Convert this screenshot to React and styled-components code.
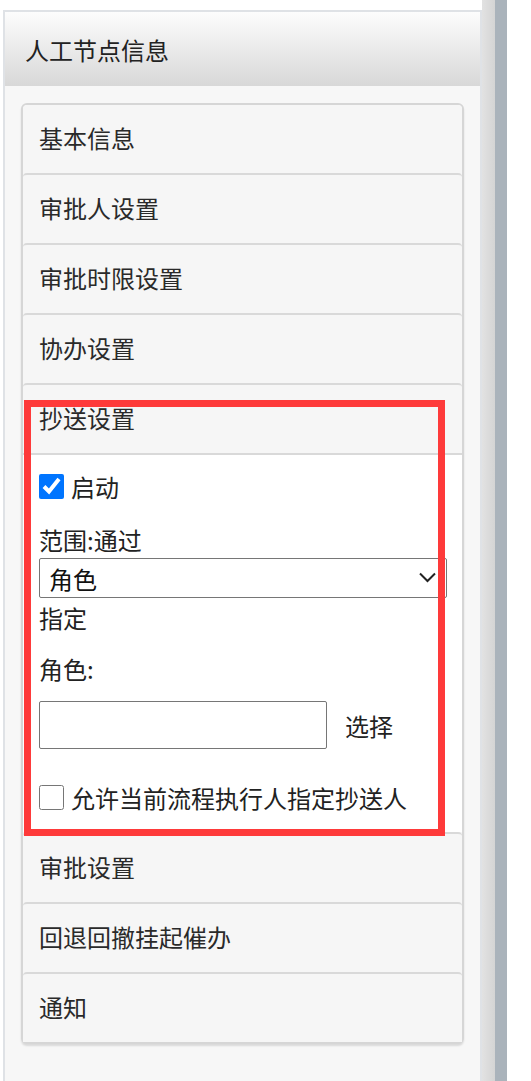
import styled, { createGlobalStyle } from 'styled-components';

const GlobalStyle = createGlobalStyle`
  html, body {
    margin: 0;
    padding: 0;
    background: #ffffff;
  }
  body {
    font-family: "Noto Sans CJK SC", "Noto Sans", "Liberation Sans", sans-serif;
    color: #222;
  }
`

const Page = styled.div`
  display: flex;
  min-height: 1081px;
  padding-left: 3px;
  background: #fff;
`

const Panel = styled.div`
  box-sizing: border-box;
  width: 479px;
  margin-top: 10px;
  border: 2px solid #dfe2e6;
  border-bottom: none;
  background: #f7f7f7;
`

const PanelHeader = styled.div`
  height: 74px;
  display: flex;
  align-items: center;
  padding: 1px 0 0 20px;
  box-sizing: border-box;
  background: linear-gradient(#fdfdfd, #d8d8d8);
  font-size: 24px;
  color: #222;
`

const PanelBody = styled.div`
  padding: 17px 16px 0 16px;
`

const Accordion = styled.div`
  position: relative;
  border: 2px solid #d6d6d6;
  border-radius: 6px;
  background: #f6f6f6;
  box-shadow: 0 2px 2px rgba(0, 0, 0, 0.12);
`

const ItemHeader = styled.div`
  height: 68px;
  display: flex;
  align-items: center;
  padding: 0 0 3px 16px;
  box-sizing: border-box;
  font-size: 24px;
  color: #2a2a2a;
  border-top: ${({ first }) => (first ? 'none' : '2px solid #d9d9d9')};
  height: ${({ first }) => (first ? 68 : 70)}px;
  border-radius: 4px 4px 0 0;
  background: #f6f6f6;
`

const ItemBody = styled.div`
  display: flex;
  flex-direction: column;
  align-items: flex-start;
  padding: 18px 16px 22px 16px;
  border-top: 2px solid #d9d9d9;
  background: #fff;
  font-size: 24px;
  color: #222;
`

const CheckRow = styled.label`
  display: flex;
  align-items: center;
  gap: 7px;
  height: 26px;
  margin-top: ${({ top }) => top || 0}px;
  font-size: 24px;
`

const Check = styled.input`
  width: 25px;
  height: 25px;
  margin: 0;
  accent-color: #0075ff;
`

const Line = styled.div`
  line-height: 32px;
  height: 32px;
  margin-top: ${({ top }) => top || 0}px;
`

const SelectWrap = styled.div`
  position: relative;
  width: 408px;
  margin-top: 2px;
`

const Select = styled.select`
  appearance: none;
  box-sizing: border-box;
  width: 100%;
  height: 40px;
  padding: 0 0 0 9px;
  border: 1px solid #767676;
  border-radius: 2px;
  background: #fff;
  font-family: inherit;
  font-size: 24px;
  color: #111;
`

const Chevron = styled.svg`
  position: absolute;
  right: 11px;
  top: 14px;
  pointer-events: none;
`

const PickRow = styled.div`
  display: flex;
  align-items: center;
  gap: 18px;
  margin-top: 16px;
`

const TextBox = styled.input`
  box-sizing: border-box;
  width: 288px;
  height: 48px;
  border: 1px solid #767676;
  border-radius: 2px;
  background: #fff;
  margin: 0;
`

const Annotation = styled.div`
  position: absolute;
  left: 1px;
  top: 295px;
  width: 421px;
  height: 436px;
  box-sizing: border-box;
  border: 7px solid #fe3a3a;
  pointer-events: none;
`

const Rail = styled.div`
  width: ${({ dark }) => (dark ? 12 : 13)}px;
  background: ${({ dark }) => (dark ? '#aab3bb' : 'linear-gradient(90deg, #e2e2e2, #d4d4d4)')};
`

const before = ['基本信息', '审批人设置', '审批时限设置', '协办设置', '抄送设置'];
const after = ['审批设置', '回退回撤挂起催办', '通知'];

export default function App() {
  return (
    <>
      <GlobalStyle />
      <Page>
        <Panel>
          <PanelHeader>人工节点信息</PanelHeader>
          <PanelBody>
            <Accordion>
              {before.map((t, i) => (
                <ItemHeader key={t} first={i === 0}>{t}</ItemHeader>
              ))}
              <ItemBody>
                <CheckRow>
                  <Check type="checkbox" defaultChecked />
                  启动
                </CheckRow>
                <Line top={25}>范围:通过</Line>
                <SelectWrap>
                  <Select defaultValue="role">
                    <option value="role">角色</option>
                  </Select>
                  <Chevron width="17" height="11" viewBox="0 0 17 11">
                    <path d="M1 1.5 L8.5 9 L16 1.5" fill="none" stroke="#222" strokeWidth="2" />
                  </Chevron>
                </SelectWrap>
                <Line top={4}>指定</Line>
                <Line top={19}>角色:</Line>
                <PickRow>
                  <TextBox type="text" />
                  <span>选择</span>
                </PickRow>
                <CheckRow top={35}>
                  <Check type="checkbox" />
                  允许当前流程执行人指定抄送人
                </CheckRow>
              </ItemBody>
              {after.map(t => (
                <ItemHeader key={t}>{t}</ItemHeader>
              ))}
              <Annotation />
            </Accordion>
          </PanelBody>
        </Panel>
        <Rail />
        <Rail dark />
      </Page>
    </>
  );
}
